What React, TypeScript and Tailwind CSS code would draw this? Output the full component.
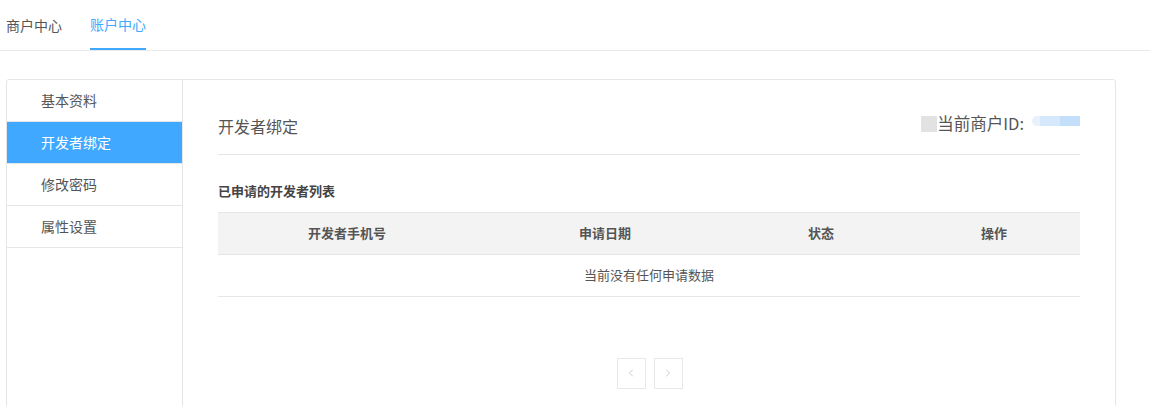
import { ChevronLeft, ChevronRight } from "lucide-react";

const menu = ["基本资料", "开发者绑定", "修改密码", "属性设置"];

export default function App() {
  return (
    <div
      className="h-[406px] w-[1150px] overflow-hidden bg-white text-[#333]"
      style={{ fontFamily: '"Microsoft YaHei", "Noto Sans CJK SC", sans-serif' }}
    >
      {/* 顶部标签 */}
      <div className="flex h-[51px] border-b border-[#e8e8e8] pl-[6px]">
        <div className="flex items-center text-[14px] text-[#555]">商户中心</div>
        <div className="ml-[28px] flex items-center border-b-2 border-[#40a9ff] text-[14px] text-[#40a9ff]">
          账户中心
        </div>
      </div>

      <div className="ml-[6px] mt-[28px] flex h-[340px] w-[1110px] rounded-[3px] border border-[#e6e6e6]">
        {/* 侧边菜单 */}
        <div className="w-[176px] shrink-0 border-r border-[#e6e6e6]">
          {menu.map((m) => (
            <div
              key={m}
              className={
                m === "开发者绑定"
                  ? "flex h-[42px] items-center border-b border-[#e6e6e6] bg-[#40a9ff] pl-[34px] text-[14px] text-white"
                  : "flex h-[42px] items-center border-b border-[#e6e6e6] pl-[34px] text-[14px] text-[#555]"
              }
            >
              {m}
            </div>
          ))}
        </div>

        {/* 内容 */}
        <div className="ml-[35px] w-[862px]">
          <div className="flex h-[75px] items-end justify-between border-b border-[#e6e6e6] pb-[16px]">
            <div className="text-[16px] text-[#555]">开发者绑定</div>
            <div className="mb-[2px] flex items-center">
              <span className="h-[16px] w-[16px] bg-[#e2e2e2]" />
              <span className="text-[16.5px] text-[#555]">当前商户ID:</span>
              <span className="mb-[6px] ml-[8px] flex h-[10px] items-center">
                <span className="h-[10px] w-[8px] rounded-l-full bg-[#e8f1fc]" />
                <span className="h-[10px] w-[20px] bg-[#d6e8fb]" />
                <span className="h-[10px] w-[20px] bg-[#c4dff9]" />
              </span>
            </div>
          </div>

          <div className="mt-[26px] text-[13px] font-bold text-[#444]">已申请的开发者列表</div>

          <div className="mt-[11px] border-t border-[#e6e6e6]">
            <div className="flex h-[42px] items-center border-b border-[#e6e6e6] bg-[#f3f3f3] text-[13px] font-bold text-[#555]">
              <div className="w-[258px] text-center">开发者手机号</div>
              <div className="w-[258px] text-center">申请日期</div>
              <div className="w-[174px] text-center">状态</div>
              <div className="w-[172px] text-center">操作</div>
            </div>
            <div className="flex h-[42px] items-center justify-center border-b border-[#e6e6e6] text-[13px] text-[#555]">
              当前没有任何申请数据
            </div>
          </div>

          <div className="mt-[61px] flex justify-center gap-[8px] pl-[1px]">
            <div className="flex h-[31px] w-[29px] items-center justify-center border border-[#e8e8e8] text-[#c5cfdb]">
              <ChevronLeft size={12} strokeWidth={2} />
            </div>
            <div className="flex h-[31px] w-[29px] items-center justify-center border border-[#e8e8e8] text-[#c5cfdb]">
              <ChevronRight size={12} strokeWidth={2} />
            </div>
          </div>
        </div>
      </div>
    </div>
  );
}
